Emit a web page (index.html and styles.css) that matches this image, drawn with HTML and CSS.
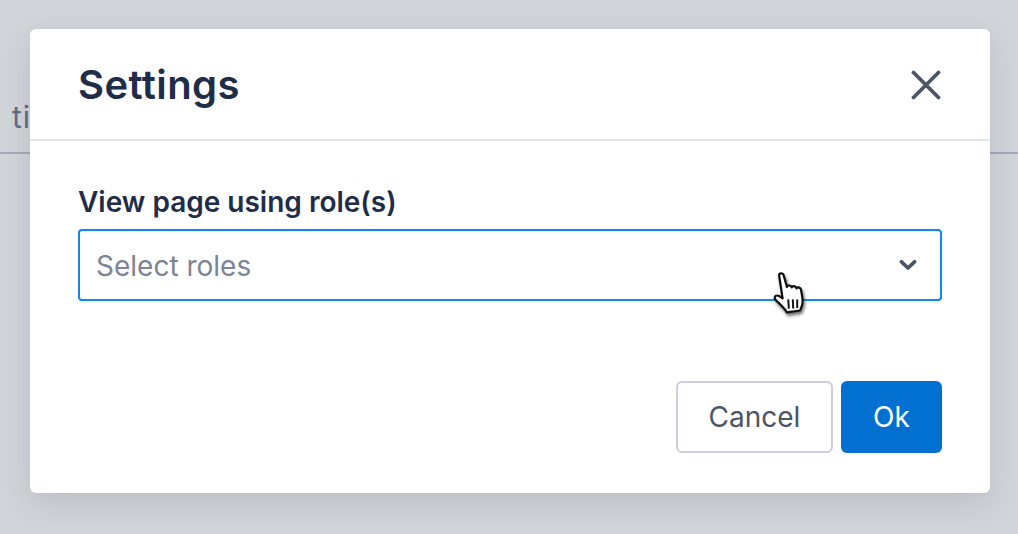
FILE: index.html
```html
<!DOCTYPE html>
<html lang="en">
<head>
<meta charset="utf-8">
<title>Settings</title>
<link rel="stylesheet" href="styles.css">
</head>
<body>
<div class="backdrop">
  <span class="bg-text">title</span>
  <div class="bg-line"></div>
</div>
<div class="dialog">
  <header class="dialog-head">
    <h1 class="dialog-title">Settings</h1>
    <button class="close" aria-label="Close">
      <svg width="30" height="30" viewBox="0 0 30 30"><path d="M2.5 2.5 L27.5 27.5 M27.5 2.5 L2.5 27.5" fill="none" stroke="#4a5568" stroke-width="3.8" stroke-linecap="round"/></svg>
    </button>
  </header>
  <div class="dialog-body">
    <label class="field-label">View page using role(s)</label>
    <div class="select">
      <span class="placeholder">Select roles</span>
      <svg class="chevron" width="18" height="12" viewBox="0 0 18 12"><path d="M2.5 2.8 L9 9 L15.5 2.8" fill="none" stroke="#4a5568" stroke-width="3.8" stroke-linecap="round" stroke-linejoin="round"/></svg>
    </div>
  </div>
  <footer class="dialog-foot">
    <button class="btn btn-cancel">Cancel</button>
    <button class="btn btn-ok">Ok</button>
  </footer>
</div>
<svg class="cursor" width="47" height="55" viewBox="0 0 36 42">
  <defs><filter id="cursor-shadow" x="-30%" y="-30%" width="160%" height="160%"><feDropShadow dx="1" dy="2" stdDeviation="1.2" flood-color="#000" flood-opacity="0.55"/></filter></defs>
  <path filter="url(#cursor-shadow)" d="M8.5 5.5 C8.5 3.5 11.5 3.5 12 5.5 L14.5 14.5 C15 12.8 17.6 13 18.2 14.8 C18.8 13.3 21.3 13.6 21.8 15.5 C22.6 14.3 25 14.8 25.3 16.5 L26.5 24 C27 28 25.5 30 24.5 32.5 L14.5 34 C13 31 9.5 28 6 24.5 C4.5 23 5 21 7 21 C8.5 21 10 22.2 11.2 23.2 Z" fill="#fff" stroke="#111" stroke-width="1.7" stroke-linejoin="round"/>
  <path d="M15.5 24 L16 31 M19 24 L19.3 31 M22.4 24 L22.4 30.5" stroke="#111" stroke-width="1.5" fill="none"/>
</svg>
</body>
</html>
```
FILE: styles.css
```css
* { box-sizing: border-box; }
html, body { margin: 0; height: 100%; }
body {
  width: 1018px;
  height: 534px;
  overflow: hidden;
  position: relative;
  background: #d1d4d9;
  font-family: Inter, "Liberation Sans", sans-serif;
}
.backdrop { position: absolute; inset: 0; }
.bg-text {
  position: absolute;
  left: 12px;
  top: 98px;
  font-size: 30px;
  line-height: 38px;
  letter-spacing: 1px;
  color: #5f6b80;
}
.bg-line {
  position: absolute;
  left: 0;
  right: 0;
  top: 152px;
  height: 2px;
  background: #a4a9b5;
}
.dialog {
  position: absolute;
  left: 30px;
  top: 29px;
  width: 960px;
  height: 464px;
  background: #fff;
  border-radius: 6px;
  box-shadow: 0 10px 30px rgba(60, 66, 80, 0.14);
  display: flex;
  flex-direction: column;
}
.dialog-head {
  height: 112px;
  flex: none;
  padding: 2px 49px 0 48px;
  border-bottom: 2px solid #e2e6eb;
  display: flex;
  align-items: center;
  justify-content: space-between;
}
.dialog-title {
  margin: 0;
  font-size: 40px;
  line-height: 44px;
  font-weight: 600;
  letter-spacing: 0.4px;
  color: #1f2d4a;
}
.close {
  padding: 0;
  border: 0;
  background: none;
  width: 30px;
  height: 30px;
  display: block;
}
.close svg { display: block; }
.dialog-body {
  flex: 1;
  padding: 44px 48px 0 48px;
}
.field-label {
  display: block;
  font-size: 28px;
  line-height: 34px;
  font-weight: 600;
  color: #1f2d4a;
  margin-bottom: 10px;
}
.select {
  height: 72px;
  border: 2px solid #0b8af5;
  border-radius: 4px;
  padding: 0 23px 0 16px;
  display: flex;
  align-items: center;
  justify-content: space-between;
}
.placeholder {
  padding-top: 2px;
  font-size: 28px;
  line-height: 34px;
  color: #7b8496;
}
.dialog-foot {
  flex: none;
  display: flex;
  justify-content: flex-end;
  gap: 8px;
  padding: 0 48px 40px 0;
}
.btn {
  height: 72px;
  border-radius: 6px;
  font-family: inherit;
  font-size: 28px;
  line-height: 34px;
  font-weight: 400;
  padding: 0;
}
.btn-cancel {
  width: 157px;
  background: #fff;
  border: 2px solid #cbd0dc;
  color: #4a5568;
}
.btn-ok {
  width: 101px;
  background: #0270d1;
  border: 0;
  color: #fff;
}
.cursor {
  position: absolute;
  left: 768px;
  top: 268px;
}
```
